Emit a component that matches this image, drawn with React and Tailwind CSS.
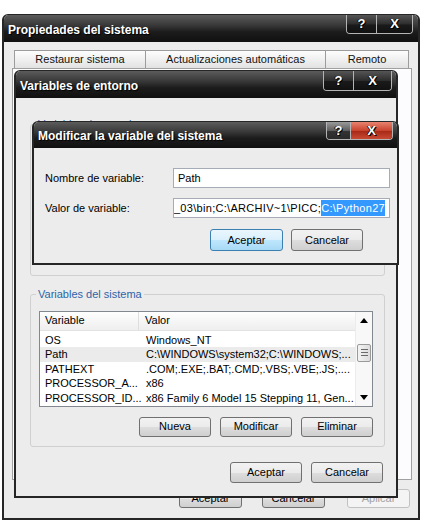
import React from 'react';

const font = "font-['Liberation_Sans',Arial,sans-serif]";

// Caption buttons (? and X) hanging from the top of a title bar
const Caps = ({ wq, wx, h, mr, red = false }) => (
  <div className={`ml-auto self-start flex ${h} ${mr} border border-t-0 border-[#b4b4b4] rounded-b-[4px] overflow-hidden`}>
    <div
      className={`${wq} flex items-center justify-center border-r border-[#b4b4b4] text-white font-bold text-[13px] [text-shadow:1px_1px_0_#000,-1px_0_0_#000] ${
        red
          ? "bg-[linear-gradient(to_bottom,#9a9a9a,#5e5e5e_50%,#333_55%,#2a2a2a)]"
          : "bg-[linear-gradient(to_bottom,#555,#2d2d2d_50%,#1a1a1a_55%,#111)]"
      }`}
    >
      ?
    </div>
    <div
      className={`${wx} flex items-center justify-center text-white font-bold text-[13px] [text-shadow:1px_1px_0_#000,-1px_0_0_#000] ${
        red
          ? "bg-[linear-gradient(to_bottom,#e8836f,#c9442f_50%,#a82a17_55%,#c94a33)]"
          : "bg-[linear-gradient(to_bottom,#555,#2d2d2d_50%,#1a1a1a_55%,#111)]"
      }`}
    >
      X
    </div>
  </div>
);

const TitleBar = ({ title, h, caps }) => (
  <div className={`${h} shrink-0 flex items-center pl-[4px] bg-[linear-gradient(to_bottom,#5c5c5c,#363636_40%,#1c1c1c_62%,#101010)]`}>
    <span className="text-white font-bold text-[12px] pt-[2px] [text-shadow:1px_1px_1px_#000]">{title}</span>
    {caps}
  </div>
);

const Btn = ({ children, w = "w-[72px]", h = "h-[20px]", primary = false, disabled = false }) => (
  <div
    className={`${w} ${h} shrink-0 flex items-center justify-center rounded-[3px] border text-[11px] ${
      primary
        ? "border-[#3c7fb1] bg-[linear-gradient(to_bottom,#eaf6fd,#d9f0fc_50%,#bee6fd_52%,#a7d9f5)] text-black"
        : disabled
        ? "border-[#c2c2c2] bg-[#f4f4f4] text-[#a3a3a3]"
        : "border-[#707070] bg-[linear-gradient(to_bottom,#f2f2f2,#ebebeb_50%,#dddddd_52%,#cfcfcf)] text-black"
    }`}
  >
    {children}
  </div>
);

const Tab = ({ w, children }) => (
  <div className={`${w} h-[18px] flex items-center justify-center border border-b-0 border-[#9c9c9c] -ml-px first:ml-0 bg-[linear-gradient(to_bottom,#fdfdfd,#f0f0f0_50%,#e2e2e2)] text-[11px] text-[#111]`}>
    {children}
  </div>
);

const rows = [
  ["OS", "Windows_NT"],
  ["Path", "C:\\WINDOWS\\system32;C:\\WINDOWS;..."],
  ["PATHEXT", ".COM;.EXE;.BAT;.CMD;.VBS;.VBE;.JS;...."],
  ["PROCESSOR_A...", "x86"],
  ["PROCESSOR_ID...", "x86 Family 6 Model 15 Stepping 11, Gen..."],
];

const Scrollbar = () => (
  <div className="w-[17px] shrink-0 flex flex-col items-center bg-[#f8f8f8] border-l border-[#ececec]">
    <div className="h-[17px] flex items-center justify-center">
      <svg width="8" height="5" viewBox="0 0 8 5"><path d="M0 5 L4 0 L8 5 Z" fill="#000" /></svg>
    </div>
    <div className="mt-[15px] w-[14px] h-[18px] rounded-[2px] border border-[#9a9a9a] bg-[linear-gradient(to_right,#f4f4f4,#dcdcdc)] flex flex-col items-center justify-center gap-[2px]">
      <div className="w-[7px] h-px bg-[#6a6a6a]" />
      <div className="w-[7px] h-px bg-[#6a6a6a]" />
      <div className="w-[7px] h-px bg-[#6a6a6a]" />
    </div>
    <div className="flex-1" />
    <div className="h-[17px] flex items-center justify-center">
      <svg width="8" height="5" viewBox="0 0 8 5"><path d="M0 0 L8 0 L4 5 Z" fill="#000" /></svg>
    </div>
  </div>
);

const ListView = () => (
  <div className="ml-[8px] w-[334px] h-[96px] border border-[#828790] bg-white flex overflow-hidden">
    <div className="flex-1 flex flex-col">
      <div className="h-[19px] flex border-b border-[#e3e3e3] bg-[linear-gradient(to_bottom,#ffffff,#f6f6f6_50%,#eeeeee)] text-[11px]">
        <div className="w-[99px] pl-[5px] flex items-center border-r border-[#dedede]">Variable</div>
        <div className="pl-[6px] flex items-center">Valor</div>
      </div>
      <div className="pt-[2px]">
        {rows.map(([k, v]) => (
          <div key={k} className={`h-[14.5px] flex items-center text-[11px] whitespace-nowrap ${k === "Path" ? "bg-[#ebebeb]" : ""}`}>
            <div className="w-[99px] pl-[5px]">{k}</div>
            <div className="pl-[7px]">{v}</div>
          </div>
        ))}
      </div>
    </div>
    <Scrollbar />
  </div>
);

export default function App() {
  return (
    <div className={`relative w-[425px] h-[525px] bg-white overflow-hidden ${font}`}>
      {/* Propiedades del sistema */}
      <div className="absolute left-[2px] top-[14px] w-[418px] h-[506px] flex flex-col bg-[#ececec] border-2 border-t border-[#262626] rounded-t-[6px] overflow-hidden">
        <TitleBar
          title="Propiedades del sistema"
          h="h-[27px]"
          caps={<Caps wq="w-[30px]" wx="w-[35px]" h="h-[19px]" mr="mr-[5px]" />}
        />
        <div className="flex-1 flex flex-col pl-[8px] pr-[6px]">
          <div className="flex pl-[2px] pt-[8px]">
            <Tab w="w-[132px]">Restaurar sistema</Tab>
            <Tab w="w-[181px]">Actualizaciones automáticas</Tab>
            <Tab w="w-[84px]">Remoto</Tab>
          </div>
          <div className="h-[412px] bg-[#fcfcfe] border border-[#a0a0a0]" />
          <div className="flex justify-end mt-[9px] mr-[2px]">
            <Btn w="w-[63px]" h="h-[19px]">Aceptar</Btn>
            <div className="ml-[20px]"><Btn w="w-[63px]" h="h-[19px]">Cancelar</Btn></div>
            <div className="ml-[22px]"><Btn w="w-[63px]" h="h-[19px]" disabled>Aplicar</Btn></div>
          </div>
        </div>
      </div>

      {/* Variables de entorno */}
      <div className="absolute left-[14px] top-[70px] w-[384px] h-[428px] flex flex-col bg-[#ececec] border-2 border-t border-[#262626] rounded-t-[6px] overflow-hidden">
        <TitleBar
          title="Variables de entorno"
          h="h-[27px]"
          caps={<Caps wq="w-[30px]" wx="w-[37px]" h="h-[20px]" mr="mr-[4px]" />}
        />
        <div className="flex-1 flex flex-col text-[11px] text-black">
          <fieldset className="ml-[14px] mt-[18px] w-[355px] h-[160px] border border-[#d0d0d0] rounded-[3px]">
            <legend className="ml-[5px] px-[2px] text-[#2d64a8]">Variables de usuario</legend>
          </fieldset>
          <fieldset className="ml-[14px] mt-[10px] w-[355px] h-[161px] border border-[#d0d0d0] rounded-[3px]">
            <legend className="ml-[5px] px-[2px] text-[#2d64a8]">Variables del sistema</legend>
            <div className="mt-[8px]">
              <ListView />
            </div>
            <div className="flex justify-end gap-[9px] mt-[10px] pr-[11px]">
              <Btn>Nueva</Btn>
              <Btn>Modificar</Btn>
              <Btn>Eliminar</Btn>
            </div>
          </fieldset>
          <div className="flex justify-end gap-[9px] mt-[15px] pr-[13px]">
            <Btn h="h-[21px]">Aceptar</Btn>
            <Btn h="h-[21px]">Cancelar</Btn>
          </div>
        </div>
      </div>

      {/* Modificar la variable del sistema */}
      <div className="absolute left-[32px] top-[121px] w-[367px] h-[144px] flex flex-col bg-[#ececec] border-2 border-t border-[#262626] rounded-t-[6px] overflow-hidden">
        <TitleBar
          title="Modificar la variable del sistema"
          h="h-[26px]"
          caps={<Caps wq="w-[24px]" wx="w-[41px]" h="h-[18px]" mr="mr-[4px]" red />}
        />
        <div className="flex-1 flex flex-col pl-[11px] pt-[20px] text-[11px] text-black">
          <div className="flex items-center">
            <div className="w-[128px]">Nombre de variable:</div>
            <div className="w-[217px] h-[20px] border border-[#a5acb5] bg-white flex items-center pl-[4px]">Path</div>
          </div>
          <div className="flex items-center mt-[10px]">
            <div className="w-[128px]">Valor de variable:</div>
            <div className="w-[217px] h-[20px] border border-[#a5acb5] bg-white flex items-center justify-end pr-[4px] overflow-hidden whitespace-nowrap tracking-[0.3px]">
              <span>_03\bin;C:\ARCHIV~1\PICC;</span>
              <span className="bg-[#3399ff] text-white">C:\Python27</span>
            </div>
          </div>
          <div className="flex justify-end gap-[8px] mt-[11px] pr-[34px]">
            <Btn w="w-[73px]" h="h-[22px]" primary>Aceptar</Btn>
            <Btn w="w-[72px]" h="h-[22px]">Cancelar</Btn>
          </div>
        </div>
      </div>
    </div>
  );
}
